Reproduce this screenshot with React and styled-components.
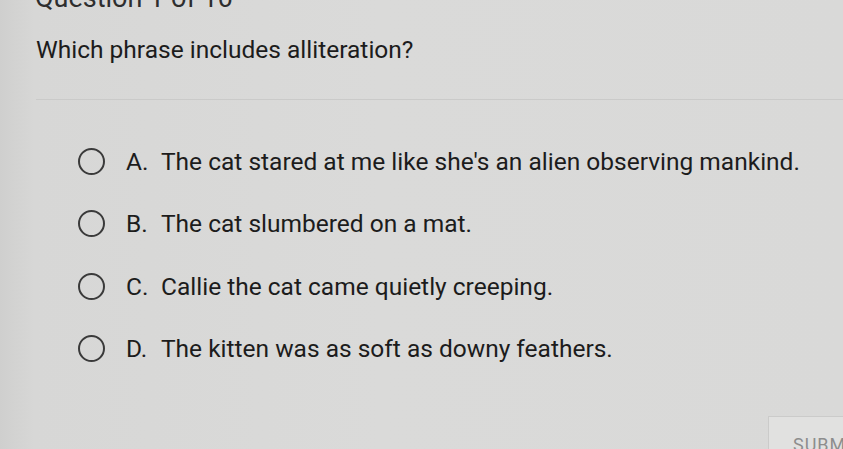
import React from "react";
import styled, { createGlobalStyle } from "styled-components";

const GlobalStyle = createGlobalStyle`
  html, body {
    margin: 0;
    padding: 0;
    background: #d8d8d7;
    overflow: hidden;
  }
  body {
    font-family: Roboto, "Liberation Sans", sans-serif;
    color: #1f1f1f;
  }
`;

const Page = styled.main`
  width: 843px;
  height: 449px;
  overflow: hidden;
  background: linear-gradient(90deg, #cfcfce 0%, #d7d7d6 4%, #dadad9 45%, #d9d9d8 100%);
  position: relative;
`;

const Heading = styled.div`
  margin-top: -15px;
  padding-left: 35px;
  font-size: 27px;
  line-height: 26px;
  color: #2e2e2e;
`;

const Question = styled.div`
  padding: 24px 0 0 36px;
  font-size: 24.5px;
  line-height: 30px;
  color: #1c1c1c;
`;

const Divider = styled.hr`
  margin: 34px 0 0 36px;
  border: 0;
  border-top: 1px solid #cacac9;
`;

const Options = styled.ul`
  list-style: none;
  margin: 46px 0 0;
  padding: 0 0 0 78px;
  display: flex;
  flex-direction: column;
  gap: 32.5px;
`;

const Option = styled.li`
  display: flex;
  align-items: center;
  height: 30px;
  font-size: 24.5px;
  color: #1c1c1c;
`;

const Radio = styled.span`
  width: 23px;
  height: 23px;
  border: 2.5px solid #3a3a3a;
  border-radius: 50%;
  flex: none;
`;

const Letter = styled.span`
  width: 35px;
  margin-left: 21px;
`;

const Footer = styled.div`
  position: absolute;
  left: 768px;
  top: 416px;
  width: 120px;
  height: 50px;
  background: #e1e1e0;
  border-top: 1px solid #cbcbca;
  border-left: 1px solid #cbcbca;
  box-sizing: border-box;
  padding: 17px 0 0 24px;
  font-size: 18px;
  letter-spacing: 1px;
  color: #8d8d8d;
`;

const options = [
  ["A.", "The cat stared at me like she's an alien observing mankind."],
  ["B.", "The cat slumbered on a mat."],
  ["C.", "Callie the cat came quietly creeping."],
  ["D.", "The kitten was as soft as downy feathers."],
];

export default function App() {
  return (
    <Page>
      <GlobalStyle />
      <Heading>Question 1 of 10</Heading>
      <Question>Which phrase includes alliteration?</Question>
      <Divider />
      <Options>
        {options.map(([letter, text]) => (
          <Option key={letter}>
            <Radio />
            <Letter>{letter}</Letter>
            <span>{text}</span>
          </Option>
        ))}
      </Options>
      <Footer>SUBMIT</Footer>
    </Page>
  );
}
